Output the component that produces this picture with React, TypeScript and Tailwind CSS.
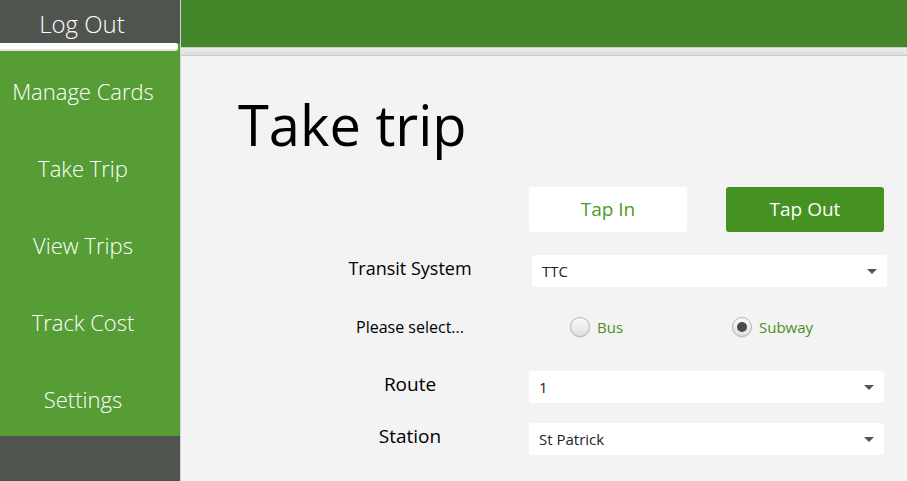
import React from 'react';

const font = { fontFamily: '"Open Sans", "Noto Sans", sans-serif' };

const Radio = ({ label, checked }: { label: string; checked?: boolean }) => (
  <label className="flex items-center gap-[7px]">
    <span className="w-[20px] h-[20px] rounded-full border border-[#b4b4b4] bg-gradient-to-b from-[#fbfbfb] to-[#dedede] shadow-[0_1px_1px_rgba(0,0,0,0.08)] flex items-center justify-center">
      {checked && <span className="w-[10px] h-[10px] rounded-full bg-[#4a4a4a]"></span>}
    </span>
    <span className="text-[15px] leading-[20px] text-[#4c8e22]">{label}</span>
  </label>
);

const Select = ({ value, className = '' }: { value: string; className?: string }) => (
  <div className={`h-[32px] bg-white rounded-[3px] flex items-center justify-between pl-[10px] pr-[10px] ${className}`}>
    <span className="text-[15px] leading-[20px] text-[#222]">{value}</span>
    <svg width="10" height="5" viewBox="0 0 10 5">
      <path d="M0 0h10L5 5z" fill="#555" />
    </svg>
  </div>
);

const App = () => {
  const menu = ['Manage Cards', 'Take Trip', 'View Trips', 'Track Cost', 'Settings'];

  return (
    <div className="flex w-[907px] h-[481px] overflow-hidden bg-[#f3f3f3]" style={font}>
      {/* Sidebar */}
      <aside className="w-[180px] shrink-0 flex flex-col bg-[#50544f]">
        <div className="h-[43px] flex items-center justify-center pr-[16px] pt-[4px] text-white text-[24px] leading-none font-light">
          Log Out
        </div>
        <div className="h-[8px] bg-[#579d36]">
          <div className="h-full bg-white border-b-2 border-[#e4e4e4] rounded-r-[3px] mr-[2px]"></div>
        </div>
        <nav className="bg-[#579d36]">
          {menu.map((item) => (
            <div
              key={item}
              className="h-[77px] flex items-center justify-center pr-[14px] pt-[2px] text-white text-[22px] leading-none font-light"
            >
              {item}
            </div>
          ))}
        </nav>
        <div className="flex-1"></div>
      </aside>
      <div className="w-px bg-[#d4d4d4]"></div>

      {/* Main */}
      <main className="flex-1 flex flex-col">
        <header className="h-[47px] bg-[#44872a]"></header>
        <div className="h-[9px] border-t border-b border-[#cbcbcb] bg-gradient-to-b from-[#ececec] to-[#dddddd]"></div>

        <div className="pl-[57px]">
          <h1 className="mt-[40px] text-[56px] leading-none text-black">Take trip</h1>
        </div>

        <div className="ml-[149px] mt-[35px] grid grid-cols-[160px_355px] gap-x-[39px]">
          {/* Tap buttons */}
          <div></div>
          <div className="flex justify-between">
            <button className="w-[158px] h-[45px] bg-white rounded-[3px] text-[19px] text-[#4b9a24]">Tap In</button>
            <button className="w-[158px] h-[45px] bg-[#459122] rounded-[3px] text-[19px] text-white">Tap Out</button>
          </div>

          {/* Transit system */}
          <div className="mt-[23px] h-[32px] flex items-center justify-center pb-[6px] text-[18px] leading-[24px] text-black">
            Transit System
          </div>
          <Select value="TTC" className="mt-[23px] ml-[3px] w-[355px]" />

          {/* Mode */}
          <div className="mt-[30px] h-[20px] flex items-center justify-center text-[16px] leading-[20px] text-black">
            Please select...
          </div>
          <div className="mt-[30px] h-[20px] pl-[41px] grid grid-cols-[162px_162px]">
            <Radio label="Bus" />
            <Radio label="Subway" checked />
          </div>

          {/* Route */}
          <div className="mt-[34px] h-[32px] flex items-center justify-center pb-[6px] text-[19px] leading-[24px] text-black">
            Route
          </div>
          <Select value="1" className="mt-[34px]" />

          {/* Station */}
          <div className="mt-[20px] h-[32px] flex items-center justify-center pb-[6px] text-[19px] leading-[24px] text-black">
            Station
          </div>
          <Select value="St Patrick" className="mt-[20px]" />
        </div>
      </main>
    </div>
  );
};

export default App;
